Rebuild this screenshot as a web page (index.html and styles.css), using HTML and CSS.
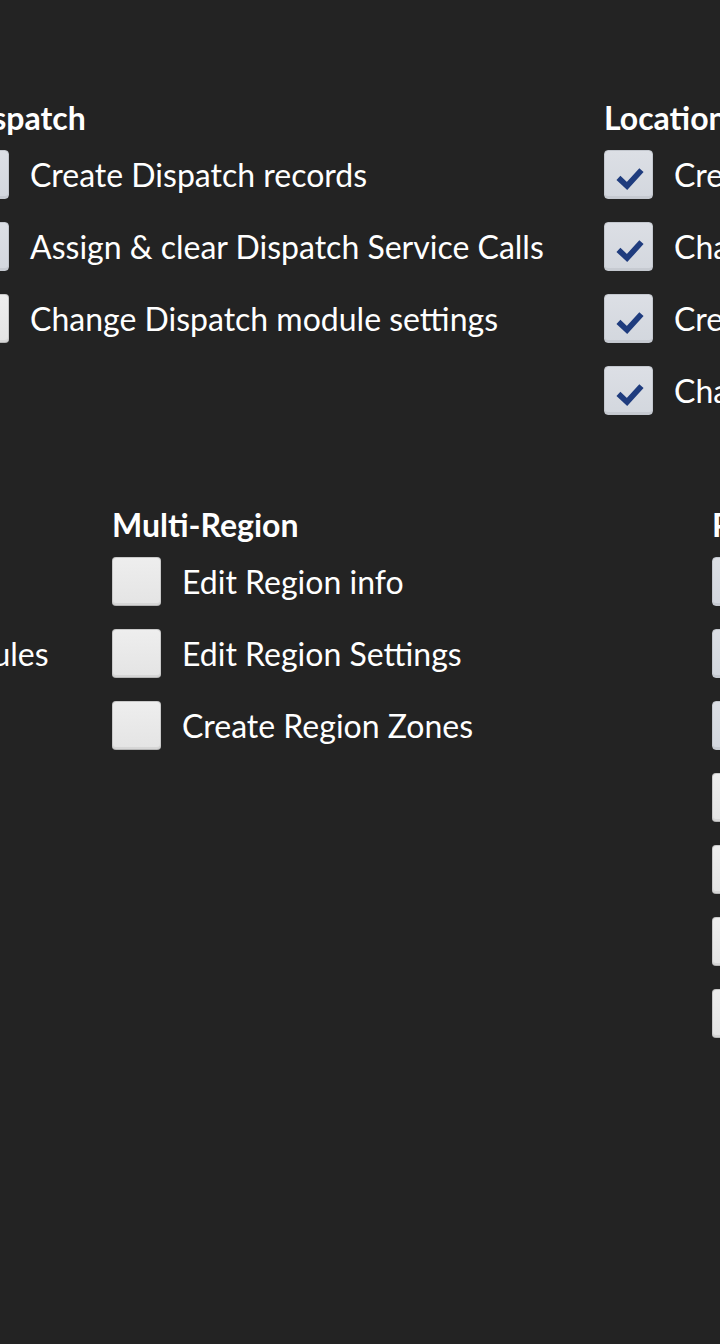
FILE: index.html
```html
<!DOCTYPE html>
<html lang="en">
<head>
<meta charset="utf-8">
<title>Permissions</title>
<link rel="stylesheet" href="styles.css">
</head>
<body>
<main class="page">
  <div class="row row-top">
    <section class="group w-dispatch">
      <h2 class="group-title">Dispatch</h2>
      <ul class="items">
        <li class="item"><span class="box checked"><svg class="tick" viewBox="0 0 49 49"><path d="M14 28 L23 36.5 L38 20"/></svg></span><span class="label">Create Dispatch records</span></li>
        <li class="item"><span class="box checked"><svg class="tick" viewBox="0 0 49 49"><path d="M14 28 L23 36.5 L38 20"/></svg></span><span class="label">Assign &amp; clear Dispatch Service Calls</span></li>
        <li class="item"><span class="box"></span><span class="label">Change Dispatch module settings</span></li>
      </ul>
    </section>
    <section class="group">
      <h2 class="group-title">Locations</h2>
      <ul class="items">
        <li class="item"><span class="box checked"><svg class="tick" viewBox="0 0 49 49"><path d="M14 28 L23 36.5 L38 20"/></svg></span><span class="label">Create Locations</span></li>
        <li class="item"><span class="box checked"><svg class="tick" viewBox="0 0 49 49"><path d="M14 28 L23 36.5 L38 20"/></svg></span><span class="label">Change Location info</span></li>
        <li class="item"><span class="box checked"><svg class="tick" viewBox="0 0 49 49"><path d="M14 28 L23 36.5 L38 20"/></svg></span><span class="label">Create Location Zones</span></li>
        <li class="item"><span class="box checked"><svg class="tick" viewBox="0 0 49 49"><path d="M14 28 L23 36.5 L38 20"/></svg></span><span class="label">Change Location settings</span></li>
      </ul>
    </section>
  </div>

  <div class="row row-bottom">
    <section class="group w-modules">
      <h2 class="group-title">Account</h2>
      <ul class="items">
        <li class="item"><span class="box"></span><span class="label">Edit Account</span></li>
        <li class="item"><span class="box"></span><span class="label">Enable/disable modules</span></li>
        <li class="item"><span class="box"></span><span class="label">Edit billing</span></li>
      </ul>
    </section>
    <section class="group w-region">
      <h2 class="group-title">Multi-Region</h2>
      <ul class="items">
        <li class="item"><span class="box"></span><span class="label">Edit Region info</span></li>
        <li class="item"><span class="box"></span><span class="label">Edit Region Settings</span></li>
        <li class="item"><span class="box"></span><span class="label">Create Region Zones</span></li>
      </ul>
    </section>
    <section class="group">
      <h2 class="group-title">Patrol</h2>
      <ul class="items">
        <li class="item"><span class="box checked"><svg class="tick" viewBox="0 0 49 49"><path d="M14 28 L23 36.5 L38 20"/></svg></span><span class="label">Create Patrol routes</span></li>
        <li class="item"><span class="box checked"><svg class="tick" viewBox="0 0 49 49"><path d="M14 28 L23 36.5 L38 20"/></svg></span><span class="label">Edit Patrol routes</span></li>
        <li class="item"><span class="box checked"><svg class="tick" viewBox="0 0 49 49"><path d="M14 28 L23 36.5 L38 20"/></svg></span><span class="label">Assign Patrol officers</span></li>
        <li class="item"><span class="box"></span><span class="label">Delete Patrol routes</span></li>
        <li class="item"><span class="box"></span><span class="label">View Patrol reports</span></li>
        <li class="item"><span class="box"></span><span class="label">Export Patrol data</span></li>
        <li class="item"><span class="box"></span><span class="label">Change Patrol settings</span></li>
      </ul>
    </section>
  </div>
</main>
</body>
</html>
```

FILE: styles.css
```css
* { box-sizing: border-box; }

html, body {
  margin: 0;
  padding: 0;
  background: #232323;
}

.page {
  width: 720px;
  height: 1344px;
  overflow: hidden;
  background: #232323;
  color: #ffffff;
  font-family: Lato, "Liberation Sans", sans-serif;
  padding-top: 100px;
}

.row {
  display: flex;
  flex-wrap: nowrap;
  width: max-content;
}

.row-top {
  margin-left: -40px;
}

.row-bottom {
  margin-top: 92px;
  margin-left: -353px;
}

.group {
  flex: none;
}

.w-dispatch { width: 644px; }
.w-modules { width: 465px; }
.w-region { width: 600px; }

.group-title {
  margin: 0 0 14px 0;
  font-size: 32px;
  line-height: 36px;
  font-weight: 700;
  white-space: nowrap;
}

.items {
  list-style: none;
  margin: 0;
  padding: 0;
  display: flex;
  flex-direction: column;
  gap: 23px;
}

.item {
  display: flex;
  align-items: center;
  gap: 21px;
  height: 49px;
  white-space: nowrap;
}

.box {
  flex: none;
  width: 49px;
  height: 49px;
  border-radius: 4px;
  border: 1px solid #c9c9c9;
  border-bottom-color: #b4b4b4;
  background: linear-gradient(#eeeeee, #e4e4e4);
  box-shadow: inset 0 -2px 0 #d6d6d6;
  display: flex;
  align-items: center;
  justify-content: center;
}

.box.checked {
  background: linear-gradient(#dcdfe5, #d3d7de);
  border-color: #c3c7ce;
  box-shadow: inset 0 -2px 0 #c6cad1;
}

.tick {
  width: 49px;
  height: 49px;
  display: block;
}

.tick path {
  fill: none;
  stroke: #1f3c7e;
  stroke-width: 6;
  stroke-linecap: butt;
  stroke-linejoin: miter;
}

.label {
  font-size: 32px;
  line-height: 38px;
  font-weight: 400;
}
```
